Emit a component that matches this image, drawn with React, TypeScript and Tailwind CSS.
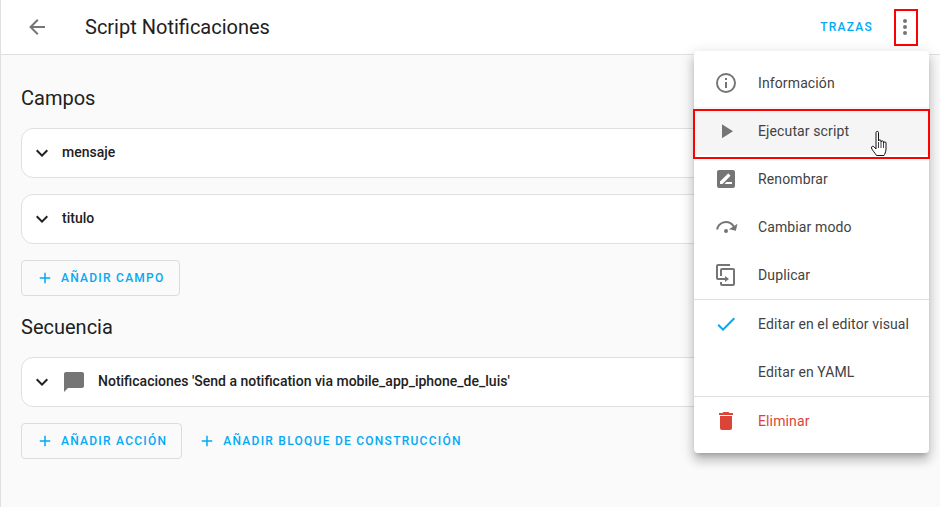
import React from "react";

const ICONS = {
  back: "M20,11V13H8L13.5,18.5L12.08,19.92L4.16,12L12.08,4.08L13.5,5.5L8,11H20Z",
  dots: "M12,16A2,2 0 0,1 14,18A2,2 0 0,1 12,20A2,2 0 0,1 10,18A2,2 0 0,1 12,16M12,10A2,2 0 0,1 14,12A2,2 0 0,1 12,14A2,2 0 0,1 10,12A2,2 0 0,1 12,10M12,4A2,2 0 0,1 14,6A2,2 0 0,1 12,8A2,2 0 0,1 10,6A2,2 0 0,1 12,4Z",
  chevron: "M7.41,8.58L12,13.17L16.59,8.58L18,10L12,16L6,10L7.41,8.58Z",
  plus: "M19,13H13V19H11V13H5V11H11V5H13V11H19V13Z",
  message: "M20,2H4C2.9,2 2,2.9 2,4V22L6,18H20C21.1,18 22,17.1 22,16V4C22,2.9 21.1,2 20,2Z",
  info: "M11,9H13V7H11M12,20C7.59,20 4,16.41 4,12C4,7.59 7.59,4 12,4C16.41,4 20,7.59 20,12C20,16.41 16.41,20 12,20M12,2A10,10 0 0,0 2,12A10,10 0 0,0 12,22A10,10 0 0,0 22,12A10,10 0 0,0 12,2M11,17H13V11H11V17Z",
  play: "M8,5.14V19.14L19,12.14L8,5.14Z",
  rename: "M18,17H10.5L12.5,15H18M6,17V14.5L13.88,6.65C14.07,6.45 14.39,6.45 14.59,6.65L16.35,8.41C16.55,8.61 16.55,8.92 16.35,9.12L8.47,17M19,3H5C3.89,3 3,3.89 3,5V19A2,2 0 0,0 5,21H19A2,2 0 0,0 21,19V5C21,3.89 20.1,3 19,3Z",
  mode: "M12,14A2,2 0 0,1 14,16A2,2 0 0,1 12,18A2,2 0 0,1 10,16A2,2 0 0,1 12,14M23.46,8.86L21.87,15.75L15,14.16L18.8,11.78C17.39,9.5 14.87,8 12,8C8.05,8 4.77,10.86 4.12,14.63L2.15,14.28C2.96,9.58 7.06,6 12,6C15.58,6 18.73,7.89 20.5,10.72L23.46,8.86Z",
  duplicate: "M11,17H4A2,2 0 0,1 2,15V3A2,2 0 0,1 4,1H16V3H4V15H11V13L15,16L11,19V17M19,21V7H8V13H6V7A2,2 0 0,1 8,5H19A2,2 0 0,1 21,7V21A2,2 0 0,1 19,23H8A2,2 0 0,1 6,21V19H8V21H19Z",
  check: "M21,7L9,19L3.5,13.5L4.91,12.09L9,16.17L19.59,5.59L21,7Z",
  trash: "M19,4H15.5L14.5,3H9.5L8.5,4H5V6H19M6,19A2,2 0 0,0 8,21H16A2,2 0 0,0 18,19V7H6V19Z",
};

function Icon({ d, className }: { d: string; className?: string }) {
  return (
    <svg viewBox="0 0 24 24" className={className} fill="currentColor">
      <path d={d} />
    </svg>
  );
}

function Row({ label, icon }: { label: string; icon?: string }) {
  return (
    <div className="flex h-[50px] items-center rounded-[12px] border border-[#e0e0e0] bg-white pl-[8px]">
      <Icon d={ICONS.chevron} className="h-6 w-6 shrink-0 text-[#212121]" />
      {icon ? (
        <>
          <Icon d={icon} className="ml-[8px] h-6 w-6 shrink-0 text-[#757575]" />
          <span className="mb-[2px] ml-[12px] text-[14px] font-medium text-[#212121]">{label}</span>
        </>
      ) : (
        <span className="mb-[2px] ml-[8px] text-[14px] font-medium text-[#212121]">{label}</span>
      )}
    </div>
  );
}

function AddButton({ label, outlined }: { label: string; outlined?: boolean }) {
  return (
    <button
      className={
        outlined
          ? "flex h-[36px] items-center rounded-[4px] border border-[#dcdcdc] pl-[15px] pr-[14px] text-[12px] font-medium tracking-[1.25px] text-[#03a9f4]"
          : "ml-[2px] flex h-[36px] items-center pl-[15px] text-[12px] font-medium tracking-[1.25px] text-[#03a9f4]"
      }
    >
      <Icon d={ICONS.plus} className="-ml-[1px] mr-[7px] h-[18px] w-[18px]" />
      {label}
    </button>
  );
}

function MenuItem({ label, icon, color, hover }: { label: string; icon?: string; color?: string; hover?: boolean }) {
  return (
    <div className={hover ? "flex h-[48px] items-center bg-[#f5f5f5] pl-[20px]" : "flex h-[48px] items-center pl-[20px]"}>
      <div className="h-6 w-6 shrink-0">
        {icon && <Icon d={icon} className={color === "red" ? "h-6 w-6 text-[#db4437]" : color === "blue" ? "h-6 w-6 text-[#03a9f4]" : "h-6 w-6 text-[#757575]"} />}
      </div>
      <span className={color === "red" ? "ml-[20px] text-[14px] tracking-[0.12px] text-[#db4437]" : "ml-[20px] text-[14px] tracking-[0.12px] text-[#424242]"}>{label}</span>
    </div>
  );
}

export default function App() {
  return (
    <div className="relative flex h-[507px] w-[940px] flex-col overflow-hidden border-l border-[#e0e0e0] bg-[#fafafa] font-['Roboto',sans-serif]">
      {/* Barra superior */}
      <header className="flex h-[55px] shrink-0 items-center border-b border-[#e0e0e0] bg-white pl-[24px]">
        <Icon d={ICONS.back} className="h-6 w-6 text-[#757575]" />
        <h1 className="ml-[36px] text-[20px] text-[#212121]">Script Notificaciones</h1>
        <span className="ml-auto text-[12px] font-medium tracking-[1.25px] text-[#03a9f4]">TRAZAS</span>
        <div className="ml-[22px] mr-[23px] flex h-[35px] w-[22px] items-center justify-center outline-2 -outline-offset-1 outline-[#ff0000]">
          <Icon d={ICONS.dots} className="mr-[2px] h-6 w-6 shrink-0 text-[#757575]" />
        </div>
      </header>

      {/* Contenido */}
      <main className="flex w-[898px] flex-col pl-[20px] pt-[30px]">
        <h2 className="text-[20px] leading-[26px] text-[#212121]">Campos</h2>
        <div className="mt-[17px] flex flex-col gap-[16px]">
          <Row label="mensaje" />
          <Row label="titulo" />
        </div>
        <div className="mt-[16px] flex">
          <AddButton label="AÑADIR CAMPO" outlined />
        </div>
        <h2 className="mt-[18px] text-[20px] leading-[26px] text-[#212121]">Secuencia</h2>
        <div className="mt-[17px]">
          <Row label="Notificaciones 'Send a notification via mobile_app_iphone_de_luis'" icon={ICONS.message} />
        </div>
        <div className="mt-[16px] flex">
          <AddButton label="AÑADIR ACCIÓN" outlined />
          <AddButton label="AÑADIR BLOQUE DE CONSTRUCCIÓN" />
        </div>
      </main>

      {/* Menú desplegable */}
      <div className="absolute left-[693px] top-[51px] w-[235px] rounded-[4px] bg-white py-[8px] shadow-[0_5px_5px_-3px_rgba(0,0,0,0.2),0_8px_10px_1px_rgba(0,0,0,0.14),0_3px_14px_2px_rgba(0,0,0,0.12)]">
        <MenuItem label="Información" icon={ICONS.info} />
        <MenuItem label="Ejecutar script" icon={ICONS.play} hover />
        <MenuItem label="Renombrar" icon={ICONS.rename} />
        <MenuItem label="Cambiar modo" icon={ICONS.mode} />
        <MenuItem label="Duplicar" icon={ICONS.duplicate} />
        <div className="h-px bg-[#e0e0e0]" />
        <MenuItem label="Editar en el editor visual" icon={ICONS.check} color="blue" />
        <MenuItem label="Editar en YAML" />
        <div className="h-px bg-[#e0e0e0]" />
        <MenuItem label="Eliminar" icon={ICONS.trash} color="red" />
      </div>

      {/* Recuadro rojo de la captura y cursor */}
      <div className="pointer-events-none absolute left-[692px] top-[109px] h-[50px] w-[237px] border-2 border-[#ff0000]" />
      <svg viewBox="0 0 20 27" className="absolute left-[869px] top-[130px] h-[27px] w-[20px]">
        <path
          d="M6 2.5C6 1 8.5 1 8.5 2.5V11C9 9.5 11 9.5 11 11V12C11.5 10.5 13.5 10.5 13.5 12V13C14 11.5 16 11.5 16 13V19C16 22 14.5 24.5 14 25.5H6.5C5.5 23.5 2 20 1.5 18C1 16.5 3 15.5 4.2 17L6 19Z"
          fill="#fff"
          stroke="#111"
          strokeWidth="1"
          strokeLinejoin="round"
        />
        <path d="M8.5 12V18M11 12V18M13.5 13V18" stroke="#111" strokeWidth="0.8" />
      </svg>
    </div>
  );
}
